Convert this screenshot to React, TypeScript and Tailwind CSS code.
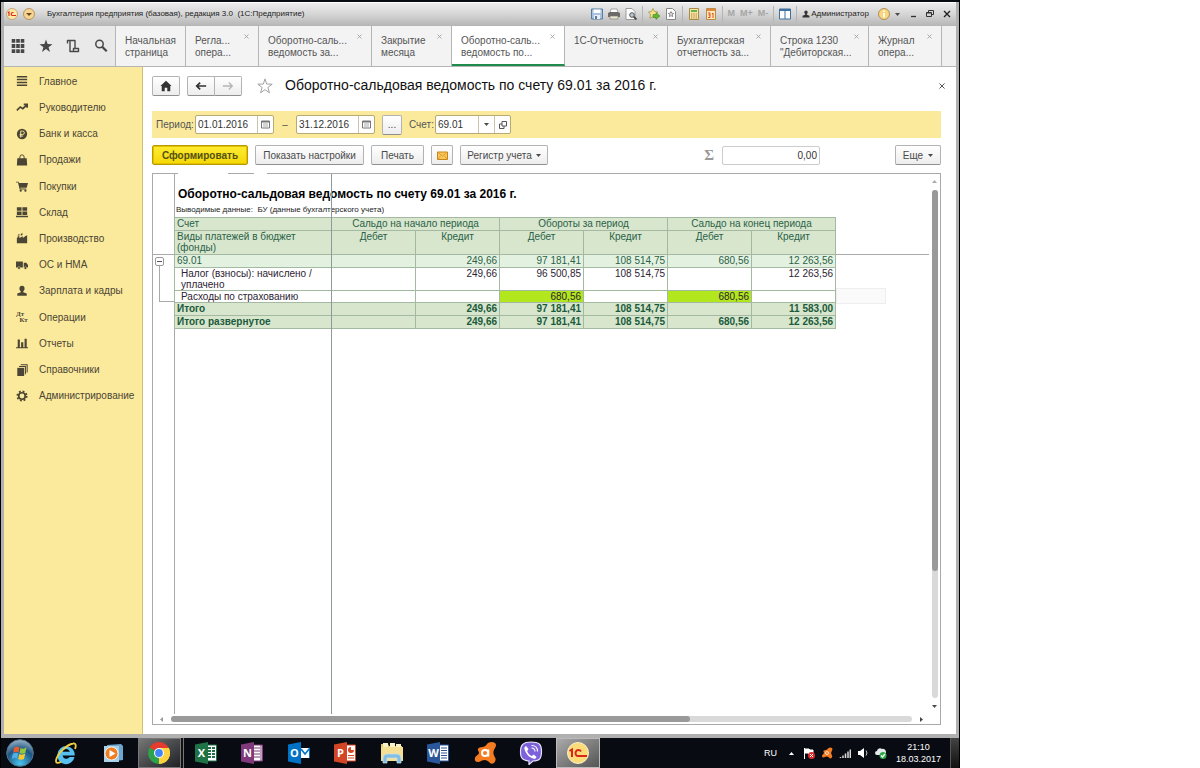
import { ReactNode } from 'react';

const sections = [
    { label: 'Главное', icon: <path d="M1 2h12M1 5.3h12M1 8.7h12M1 12h12" stroke="currentColor" strokeWidth="1.6" /> },
    {
        label: 'Руководителю',
        icon: <path d="M1 11l4-4 3 2 4-4M9 4h4v4" fill="none" stroke="currentColor" strokeWidth="2" />,
    },
    {
        label: 'Банк и касса',
        icon: (
            <>
                <circle cx="7" cy="7" r="6" fill="currentColor" />
                <path d="M5.5 11V3.6h2.3a1.9 1.9 0 010 3.9H4.3M4.3 9.3h4" fill="none" stroke="#fcea9c" strokeWidth="1.1" />
            </>
        ),
    },
    {
        label: 'Продажи',
        icon: (
            <>
                <path d="M1.500 5h11l.5 8.500H1z" fill="currentColor" />
                <path d="M4.5 7V3.5a2.5 2.5 0 015 0V7" fill="none" stroke="currentColor" strokeWidth="1.1" />
            </>
        ),
    },
    {
        label: 'Покупки',
        icon: (
            <>
                <path d="M0 2h3l.5 1.5H14L12.5 9H5l.3 1H12v1H4.3L2.3 3H0z" fill="currentColor" />
                <circle cx="5.5" cy="12.5" r="1.3" fill="currentColor" />
                <circle cx="11" cy="12.5" r="1.3" fill="currentColor" />
            </>
        ),
    },
    {
        label: 'Склад',
        icon: <path d="M1 1.5h5.5v4H1zM7.5 1.5H13v4H7.5zM1 6.5h5.5v4H1zM7.5 6.5H13v4H7.5zM0 11.3h14V13H0z" fill="currentColor" />,
    },
    {
        label: 'Производство',
        icon: <path d="M1 13V7l1-1V5h2v2l4-2v2l4-3 1 0v9zM2 3.5L4 2v2H2zM5.5 2.5l2-1.5v2.5l-2 1z" fill="currentColor" />,
    },
    {
        label: 'ОС и НМА',
        icon: (
            <>
                <path d="M0 3h8v7H0zM9 4.5h3L14 7v3H9z" fill="currentColor" />
                <circle cx="3.5" cy="10.5" r="1.6" fill="currentColor" stroke="#fcea9c" strokeWidth=".5" />
                <circle cx="11" cy="10.5" r="1.6" fill="currentColor" stroke="#fcea9c" strokeWidth=".5" />
            </>
        ),
    },
    {
        label: 'Зарплата и кадры',
        icon: <path d="M7 1a3 3 0 013 3c0 1.5-.7 2.6-1.5 3.2V8.500L12.500 10v2.500h-11V10l4-1.500V7.200C4.700 6.600 4 5.500 4 4a3 3 0 013-3z" fill="currentColor" />,
    },
    {
        label: 'Операции',
        icon: (
            <g fill="currentColor" fontFamily="Liberation Serif, serif" fontWeight="700" fontSize="8">
                <text x="0" y="6">Дт</text>
                <text x="4" y="13">Кт</text>
            </g>
        ),
    },
    { label: 'Отчеты', icon: <path d="M2 3h2.500v9H2zM6 6h2.500v6H6zM10 2h2.500v10H10zM0 12h14v1H0z" fill="currentColor" /> },
    {
        label: 'Справочники',
        icon: (
            <>
                <path d="M1.500 4.500h8V14h-8z" fill="currentColor" />
                <path d="M3.500 3h7.500v9M5.500 1h7.500V10" fill="none" stroke="currentColor" strokeWidth="1.200" />
            </>
        ),
    },
    {
        label: 'Администрирование',
        icon: (
            <>
                <circle cx="7" cy="7" r="3.800" fill="none" stroke="currentColor" strokeWidth="2" />
                <circle cx="7" cy="7" r="5.500" fill="none" stroke="currentColor" strokeWidth="2" strokeDasharray="2.160 2.160" />
            </>
        ),
    },
];

const tabs = [
    { lines: ['Начальная', 'страница'], width: 'w-[70px]', pinned: true },
    { lines: ['Регла...', 'опера...'], width: 'w-[73px]' },
    { lines: ['Оборотно-саль...', 'ведомость за...'], width: 'w-[113px]' },
    { lines: ['Закрытие', 'месяца'], width: 'w-[80px]' },
    { lines: ['Оборотно-саль...', 'ведомость по...'], width: 'w-[113px]', active: true },
    { lines: ['1С-Отчетность'], width: 'w-[103px]' },
    { lines: ['Бухгалтерская', 'отчетность за...'], width: 'w-[103px]' },
    { lines: ['Строка 1230', '"Дебиторская...'], width: 'w-[98px]' },
    { lines: ['Журнал', 'опера...'], width: 'w-[73px]' },
];

const rows = [
    { name: '69.01', kind: 'account', height: 'h-[13px]', values: ['', '249,66', '97 181,41', '108 514,75', '680,56', '12 263,56'] },
    { name: 'Налог (взносы): начислено / уплачено', kind: 'detail', height: 'h-[23px]', values: ['', '249,66', '96 500,85', '108 514,75', '', '12 263,56'] },
    { name: 'Расходы по страхованию', kind: 'detail', height: 'h-[12px]', values: ['', '', '680,56', '', '680,56', ''], marked: true },
    { name: 'Итого', kind: 'total', height: 'h-[13px]', values: ['', '249,66', '97 181,41', '108 514,75', '', '11 583,00'] },
    { name: 'Итого развернутое', kind: 'total', height: 'h-[13px]', values: ['', '249,66', '97 181,41', '108 514,75', '680,56', '12 263,56'] },
];

const rowStyles: Record<string, string> = {
    account: 'bg-[#e3f2e0] text-[#2b6148]',
    detail: 'bg-white text-[#2c2433]',
    total: 'bg-[#d7e6cd] font-bold text-[#1b5a3c]',
};

const button =
    'flex h-5 items-center justify-center rounded-[2px] border border-[#b3b3b3] border-b-[#8f8f8f] bg-gradient-to-b from-white to-[#ededed] text-[10px] text-[#4a4a4a]';

function Svg({ size = 'size-[14px]', box = 14, children }: { size?: string; box?: number; children: ReactNode }) {
    return (
        <svg viewBox={`0 0 ${box} ${box}`} className={`${size} shrink-0`} aria-hidden="true">
            {children}
        </svg>
    );
}

function Caret() {
    return (
        <svg viewBox="0 0 5 3" className="h-[3px] w-[5px]" aria-hidden="true">
            <path d="M0 0h5L2.500 3z" fill="#4a4a4a" />
        </svg>
    );
}

function Separator() {
    return <span className="h-4 w-px bg-[#b4b4b4]" />;
}

function TitleBar() {
    return (
        <header className="flex h-6 items-center bg-gradient-to-b from-[#eeeeee] via-[#d6d6d6] to-[#b5b5b5] pr-px pl-[2px] text-[9px] text-[#222] shadow-[inset_0_1px_0_#fff]">
            <button aria-label="Меню 1С" className="mr-[5px]">
                <Svg size="size-3" box={12}>
                    <circle cx="6" cy="6" r="5.500" fill="#fde9a6" stroke="#b98d62" strokeWidth=".7" />
                    <path d="M2 5l1-1v4M7.500 4.800a1.500 1.500 0 10-.5 2.700H10" fill="none" stroke="#d8291c" strokeWidth="1.100" />
                </Svg>
            </button>
            <button aria-label="Главное меню">
                <Svg size="size-3" box={12}>
                    <circle cx="6" cy="6" r="5.500" fill="#f8d491" stroke="#a48455" strokeWidth=".8" />
                    <path d="M3 5h6L6 8z" fill="#6b4b23" />
                </Svg>
            </button>
            <span className="ml-1"><Separator /></span>
            <h1 className="ml-2 text-[8px] whitespace-pre">Бухгалтерия предприятия (базовая), редакция 3.0  (1С:Предприятие)</h1>
            <div className="ml-auto flex items-center gap-[5px]">
                <button aria-label="Сохранить">
                    <Svg size="size-3" box={12}>
                        <path d="M.5 1h11v10H.5z" fill="#a8c3df" stroke="#567ca4" />
                        <path d="M2.500 1.500h7V5h-7z" fill="#fff" />
                        <path d="M3 7h6v4H3z" fill="#e9eff5" />
                        <path d="M4 8h2v3H4z" fill="#567ca4" />
                    </Svg>
                </button>
                <button aria-label="Печать документа">
                    <Svg size="size-3" box={12}>
                        <path d="M3 1h6l1 4H2z" fill="#fff" stroke="#888" strokeWidth=".7" />
                        <path d="M0 5l2-1h8l2 1v4H0z" fill="#6d6a67" />
                        <path d="M2 8h8v3H2z" fill="#ece5cc" stroke="#777" strokeWidth=".6" />
                    </Svg>
                </button>
                <button aria-label="Просмотр">
                    <Svg size="size-3" box={12}>
                        <path d="M1 .5h6l3 3v8H1z" fill="#fff" stroke="#9a9a9a" />
                        <circle cx="7" cy="7" r="2.300" fill="#b9cbd8" stroke="#555" />
                        <path d="M8.700 8.700L11.500 11.500" stroke="#444" strokeWidth="1.800" />
                    </Svg>
                </button>
                <Separator />
                <button aria-label="В избранное">
                    <Svg size="size-3" box={12}>
                        <path d="M5 .5l1.500 3 3.500.5-2.500 2.500.5 4-3-2-3 2 .5-4L.5 4l3-.5z" fill="#f6e28a" stroke="#a18f38" strokeWidth=".7" />
                        <path d="M5 6.500h3V4.500L12 8l-4 3.500v-2H5z" fill="#64b82c" stroke="#3d7a1a" strokeWidth=".5" />
                    </Svg>
                </button>
                <button aria-label="Избранное окна">
                    <Svg size="size-3" box={12}>
                        <path d="M1.500.5h6l3 3v8h-9z" fill="#fff" stroke="#888" />
                        <path d="M6 3.500l.8 1.700 1.900.2-1.400 1.300.4 1.900L6 7.700l-1.700.9.4-1.900-1.400-1.300 1.900-.2z" fill="#ddd" stroke="#555" strokeWidth=".6" />
                    </Svg>
                </button>
                <Separator />
                <button aria-label="Калькулятор">
                    <Svg size="size-3" box={12}>
                        <path d="M1.500.5h9v11h-9z" fill="#f4e5a8" stroke="#a98b42" />
                        <path d="M3 2h6v2H3z" fill="#6bb04a" />
                        <path d="M3 6h6M3 8h6M3 10h6" stroke="#b8792f" strokeDasharray="1.300 1" />
                    </Svg>
                </button>
                <button aria-label="Календарь">
                    <Svg size="size-3" box={12}>
                        <path d="M1.500.5h9v11h-9z" fill="#fbe9b8" stroke="#bd8a4a" />
                        <path d="M2 1h8v2H2z" fill="#e3873d" />
                        <path d="M3 5h2v4.500H3M3.500 7H5M7 6l1-1v5" fill="none" stroke="#e04a1d" />
                    </Svg>
                </button>
                <Separator />
                <button className="font-bold text-[#a5a5a5]">M</button>
                <button className="font-bold text-[#a5a5a5]">M+</button>
                <button className="font-bold text-[#a5a5a5]">M-</button>
                <Separator />
                <button aria-label="Панели окна">
                    <Svg size="size-3" box={12}>
                        <path d="M.5 1h11v10H.5z" fill="#fff" stroke="#40709e" />
                        <path d="M0 1h12v2H0zM5.500 2h1v9h-1z" fill="#40709e" />
                    </Svg>
                </button>
                <Separator />
                <button className="flex items-center gap-px text-[8px]">
                    <Svg size="size-2">
                        <path d="M7 1a3 3 0 013 3c0 1.500-.7 2.600-1.500 3.200V8.500L13 10v3H1v-3l4.500-1.500V7.200C4.700 6.600 4 5.500 4 4a3 3 0 013-3z" fill="#333" />
                    </Svg>
                    Администратор
                </button>
                <button aria-label="Справка" className="ml-1">
                    <Svg size="size-3" box={12}>
                        <circle cx="6" cy="6" r="5.500" fill="#f9d77f" stroke="#a17c3c" strokeWidth=".8" />
                        <path d="M6 2.500v1.500M6 5v4.500" stroke="#fff" strokeWidth="1.800" />
                    </Svg>
                </button>
                <Caret />
                <button aria-label="Свернуть" className="ml-1">
                    <Svg size="size-2" box={8}><path d="M2 6.500h5" stroke="#333" strokeWidth="1.300" /></Svg>
                </button>
                <button aria-label="Восстановить" className="ml-1">
                    <Svg size="size-2" box={8}><path d="M2.500 2.500v-2h5v4h-2M.5 2.500h5v4h-5zM.5 3h5" fill="none" stroke="#333" /></Svg>
                </button>
                <button aria-label="Закрыть программу" className="mx-1">
                    <Svg size="size-2" box={8}><path d="M1 1l6 6M7 1L1 7" stroke="#222" strokeWidth="1.400" /></Svg>
                </button>
            </div>
        </header>
    );
}

function TabStrip() {
    return (
        <nav className="flex h-[41px] border-b border-[#b5b5b5] bg-[#f0f0f0] text-[10px] leading-3 text-[#555]">
            <div className="flex w-28 shrink-0 items-center border-r border-[#b5b5b5] bg-[#e9e9e9] text-[#484848]">
                <button aria-label="Все разделы" className="flex w-7 justify-center">
                    <Svg>
                        <path d="M2.500 0v14M7 0v14M11.500 0v14" stroke="currentColor" strokeWidth="3.600" strokeDasharray="3.800 1.300" />
                    </Svg>
                </button>
                <button aria-label="Избранное" className="flex w-7 justify-center">
                    <Svg><path d="M7 .5l1.600 4.600 4.900.1-3.900 3 1.400 4.700L7 10.100l-4 2.800 1.400-4.700-3.900-3 4.900-.1z" fill="currentColor" /></Svg>
                </button>
                <button aria-label="История" className="flex w-7 justify-center">
                    <Svg><path d="M1.500 4.500V1.500H9v8M4 1.500v11h8.500V9.500H7.500v3" fill="none" stroke="currentColor" strokeWidth="1.400" strokeLinejoin="round" /></Svg>
                </button>
                <button aria-label="Поиск" className="flex w-7 justify-center">
                    <Svg>
                        <circle cx="5.500" cy="5" r="3.700" fill="none" stroke="currentColor" strokeWidth="1.500" />
                        <path d="M8.200 7.800l4.500 4.500" stroke="currentColor" strokeWidth="2.300" />
                    </Svg>
                </button>
            </div>
            {tabs.map((tab, index) => (
                <div
                    key={index}
                    className={`relative shrink-0 border-r border-[#b5b5b5] ${tab.width} ${tab.active ? 'border-b-2 border-b-[#1f8b4c] bg-white' : 'bg-[#f3f3f3]'}`}
                >
                    <button className="flex h-full w-full flex-col items-start pt-[9px] pl-[9px] text-left whitespace-nowrap">
                        {tab.lines.map((line) => (
                            <span key={line}>{line}</span>
                        ))}
                    </button>
                    {!tab.pinned && (
                        <button aria-label="Закрыть вкладку" className="absolute top-2 right-[9px]">
                            <Svg size="size-[5px]" box={5}><path d="M.5.5l4 4M4.500.5l-4 4" stroke="#999" strokeWidth=".8" /></Svg>
                        </button>
                    )}
                </div>
            ))}
        </nav>
    );
}

function Sidebar() {
    return (
        <aside className="w-[139px] shrink-0 border-r border-[#d0bf78] bg-[#fcea9c] pt-px">
            <ul className="grid h-[341px] auto-rows-fr text-[10px] text-[#4a4535]">
                {sections.map((section) => (
                    <li key={section.label} className="flex">
                        <a href="#" className="flex w-full items-center gap-[11px] pl-3">
                            <Svg size="size-3">{section.icon}</Svg>
                            {section.label}
                        </a>
                    </li>
                ))}
            </ul>
        </aside>
    );
}

function DateField({ label, value }: { label: string; value: string }) {
    return (
        <div className="flex h-[19px] w-[79px] rounded-[2px] border border-[#b8aa75] bg-white">
            <input aria-label={label} defaultValue={value} className="min-w-0 flex-1 pl-[2px] text-[10px] text-[#333] outline-none" />
            <button aria-label="Выбрать дату" className="flex w-4 items-center justify-center border-l border-[#c9c3ae]">
                <Svg size="size-[9px]" box={9}>
                    <path d="M.5 1h8v7h-8z" fill="#fff" stroke="#777" />
                    <path d="M0 1h9v1.500H0z" fill="#777" />
                    <path d="M2 4h5M2 6h5" stroke="#aaa" />
                </Svg>
            </button>
        </div>
    );
}

function FormHeader() {
    return (
        <div className="flex h-[37px] items-center">
            <button aria-label="Начальная страница" className={`${button} w-7`}>
                <Svg size="size-3"><path d="M7 1l6.500 6H12v6H8.500V9h-3v4H2V7H.5z" fill="#333" /></Svg>
            </button>
            <div className="ml-[7px] flex">
                <button aria-label="Назад" className={`${button} w-7 rounded-r-none border-r-[#ccc]`}>
                    <Svg size="size-3"><path d="M13 7H2M6 3L2 7l4 4" fill="none" stroke="#333" strokeWidth="2" /></Svg>
                </button>
                <button aria-label="Вперед" className={`${button} -ml-px w-7 rounded-l-none`}>
                    <Svg size="size-3"><path d="M1 7h11M8 3l4 4-4 4" fill="none" stroke="#b5b5b5" strokeWidth="1.500" /></Svg>
                </button>
            </div>
            <button aria-label="Добавить в избранное" className="ml-[15px]">
                <Svg size="size-4"><path d="M7 .8l1.500 4.500 4.800.1-3.800 2.900 1.400 4.600L7 10.200l-3.900 2.700 1.400-4.600L.7 5.400l4.800-.1z" fill="#fff" stroke="#999" strokeWidth=".8" /></Svg>
            </button>
            <h2 className="ml-3 text-[14px] text-[#111]">Оборотно-сальдовая ведомость по счету 69.01 за 2016 г.</h2>
            <button aria-label="Закрыть форму" className="-mr-1 ml-auto">
                <Svg size="size-[6px]" box={6}><path d="M.5.5l5 5M5.500.5l-5 5" stroke="#555" /></Svg>
            </button>
        </div>
    );
}

function FilterBar() {
    return (
        <div className="mt-[7px] flex h-[27px] items-center bg-[#fcea9c] pl-1 text-[10px] text-[#555]">
            <span className="w-[39px]">Период:</span>
            <DateField label="Начало периода" value="01.01.2016" />
            <span className="w-[22px] text-center">–</span>
            <DateField label="Конец периода" value="31.12.2016" />
            <button className={`${button} ml-[7px] w-5`}>...</button>
            <label htmlFor="account" className="ml-[7px] w-[26px]">Счет:</label>
            <div className="flex h-[19px] w-[76px] rounded-[2px] border border-[#b8aa75] bg-white">
                <input id="account" defaultValue="69.01" className="min-w-0 flex-1 pl-[2px] text-[10px] text-[#333] outline-none" />
                <button aria-label="Выбрать счет" className="flex w-4 items-center justify-center border-l border-[#c9c3ae]">
                    <Caret />
                </button>
                <button aria-label="Открыть счет" className="flex w-4 items-center justify-center border-l border-[#c9c3ae]">
                    <Svg size="size-2" box={8}><path d="M3 .5h4.500V5H3zM3 3H.5v4.500H5V5" fill="none" stroke="#555" /></Svg>
                </button>
            </div>
        </div>
    );
}

function Commands() {
    return (
        <div className="mt-[7px] flex items-center gap-[7px]">
            <button className="flex h-5 w-24 items-center justify-center rounded-[2px] border border-[#b99b00] bg-gradient-to-b from-[#ffec2e] to-[#f4d800] text-[10px] font-bold text-[#54500f] shadow-[inset_0_0_0_1px_#e3c000]">
                Сформировать
            </button>
            <button className={`${button} w-[109px]`}>Показать настройки</button>
            <button className={`${button} w-[53px]`}>Печать</button>
            <button aria-label="Отправить по почте" className={`${button} w-[22px]`}>
                <Svg size="size-[11px]" box={11}>
                    <path d="M.5 2h10v7.500H.5z" fill="#f9c65a" stroke="#c98618" />
                    <path d="M1 2.500L5.500 6 10 2.500M1 9l3-3.500M10 9L7 5.500" fill="none" stroke="#d9932a" strokeWidth=".8" />
                </Svg>
            </button>
            <button className={`${button} w-[88px] gap-1`}>Регистр учета <Caret /></button>
            <div className="ml-auto flex items-center gap-2">
                <label htmlFor="sum" className="font-['Liberation_Serif',serif] text-[15px] leading-4 font-bold text-[#999]">Σ</label>
                <input id="sum" defaultValue="0,00" className="h-[19px] w-[98px] rounded-[2px] border border-[#ccc] px-[2px] text-right text-[10px] text-[#333]" />
            </div>
            <button className={`${button} ml-[68px] w-[46px] gap-[5px]`}>Еще <Caret /></button>
        </div>
    );
}

function BalanceTable() {
    const cell = 'border border-[#a3b9a2] p-0 align-top';
    return (
        <table className="w-[661px] shrink-0 table-fixed border-collapse text-[10px] leading-[11px]">
            <colgroup>
                <col className="w-[157px]" />
                <col span={6} className="w-[84px]" />
            </colgroup>
            <thead className="bg-[#d7e6cd] text-[#2b6148]">
                <tr className="h-[13px]">
                    <th className={`${cell} pl-[2px] text-left font-normal`}>Счет</th>
                    <th colSpan={2} className={`${cell} font-normal`}>Сальдо на начало периода</th>
                    <th colSpan={2} className={`${cell} font-normal`}>Обороты за период</th>
                    <th colSpan={2} className={`${cell} font-normal`}>Сальдо на конец периода</th>
                </tr>
                <tr className="h-6">
                    <th className={`${cell} pl-[2px] text-left font-normal`}>Виды платежей в бюджет (фонды)</th>
                    {[0, 1, 2].flatMap((group) => [
                        <th key={`d${group}`} className={`${cell} font-normal`}>Дебет</th>,
                        <th key={`k${group}`} className={`${cell} font-normal`}>Кредит</th>,
                    ])}
                </tr>
            </thead>
            <tbody>
                {rows.map((row) => (
                    <tr key={row.name} className={`${row.height} ${rowStyles[row.kind]}`}>
                        <td className={`${cell} ${row.kind === 'detail' ? 'pr-2 pl-[6px]' : 'pl-[2px]'}`}>{row.name}</td>
                        {row.values.map((value, index) => (
                            <td key={index} className={`${cell} pr-[2px] text-right ${row.marked && value ? 'bg-[#b2e61d]' : ''}`}>
                                {value}
                            </td>
                        ))}
                    </tr>
                ))}
            </tbody>
        </table>
    );
}

function Sheet() {
    return (
        <div className="relative mt-2 flex flex-1 flex-col border border-[#a9a9a9] bg-white">
            <span className="absolute -top-px left-[25px] h-px w-[50px] bg-white" />
            <span className="absolute -top-px left-[101px] h-px w-[13px] bg-white" />
            <div className="flex flex-1">
                <div className="flex w-[22px] shrink-0 flex-col border-r border-[#a9a9a9]">
                    <div className="h-[81px] border-b border-[#a9a9a9]" />
                    <button aria-label="Свернуть группу" className="mt-[2px] ml-[2px] flex size-[9px] items-center justify-center rounded-[2px] border border-[#999]">
                        <span className="h-px w-[5px] bg-[#555]" />
                    </button>
                    <div className="ml-[6px] h-9 border-b border-l border-[#a9a9a9]" />
                </div>
                <div className="relative min-w-0 flex-1">
                    <h3 className="pt-[12px] pl-[3px] text-[12px] leading-4 font-bold text-black">
                        Оборотно-сальдовая ведомость по счету 69.01 за 2016 г.
                    </h3>
                    <p className="pl-px text-[8px] leading-[15px] whitespace-pre text-[#222]">
                        Выводимые данные:  БУ (данные бухгалтерского учета)
                    </p>
                    <div className="-ml-px flex">
                        <BalanceTable />
                        <div className="flex-1">
                            <div className="h-[38px] border-b border-[#a9a9a9]" />
                            <div className="mt-[33px] h-4 w-[50px] border border-[#eee] bg-[#fafafa]" />
                        </div>
                    </div>
                    <span className="absolute inset-y-0 left-[156px] w-px bg-[#8d9a9a]" />
                </div>
                <div className="flex w-[11px] flex-col items-center gap-[7px] pt-[6px] pb-[6px]">
                    <svg viewBox="0 0 5 3" className="h-[3px] w-[5px]"><path d="M0 3h5L2.500 0z" fill="#aaa" /></svg>
                    <div className="flex w-[6px] flex-1 flex-col rounded-full bg-[#d9d9d9]">
                        <div className="h-3/4 rounded-full bg-[#999]" />
                    </div>
                    <Caret />
                </div>
            </div>
            <div className="flex h-[10px] items-center gap-2 pr-[17px] pl-[7px]">
                <svg viewBox="0 0 3 5" className="h-[5px] w-[3px]"><path d="M3 0v5L0 2.500z" fill="#999" /></svg>
                <div className="flex h-[6px] flex-1 rounded-full bg-[#d9d9d9]">
                    <div className="w-7/10 rounded-full bg-[#999]" />
                </div>
                <svg viewBox="0 0 3 5" className="h-[5px] w-[3px]"><path d="M0 0v5l3-2.500z" fill="#444" /></svg>
            </div>
        </div>
    );
}

function OfficeIcon({ color, mark, children }: { color: string; mark: string; children: ReactNode }) {
    return (
        <Svg size="size-[22px]" box={22}>
            <path d="M11 3h10.500v16H11z" fill="#fff" stroke={color} />
            {children}
            <path d="M0 2.500L13 0v22L0 19.500z" fill={color} />
            <text x="6.500" y="15" fill="#fff" fontSize="11" fontWeight="700" textAnchor="middle" fontFamily="Open Sans, sans-serif">{mark}</text>
        </Svg>
    );
}

const apps = [
    {
        name: 'Internet Explorer',
        icon: (
            <Svg size="size-6" box={24}>
                <path d="M20.500 16A8.600 8.600 0 113.500 13a8.600 8.600 0 0117.200 1.500H8.500a4 4 0 007.200 1.500zM8.500 10.800h7.200a3.700 3.700 0 00-7.200 0z" fill="#56c1f0" fillRule="evenodd" />
                <path d="M21 8c1.500-4 .6-6-2-5.500C13 3.500 3 13 2 19.500c-.3 3 2.300 3 5 1.200" fill="none" stroke="#f2cf3e" strokeWidth="1.800" />
            </Svg>
        ),
    },
    {
        name: 'Медиаплеер',
        icon: (
            <Svg size="size-5" box={20}>
                <path d="M4 2l14-1 2 2v14l-14 2z" fill="#6da7cf" />
                <path d="M1 3h15v16H1z" fill="#a9d0e9" />
                <circle cx="8.500" cy="10.500" r="6.500" fill="#ef7d22" stroke="#fff" strokeWidth=".8" />
                <path d="M6.500 7v7l6-3.500z" fill="#fff" />
            </Svg>
        ),
    },
    {
        name: 'Chrome',
        running: true,
        icon: (
            <Svg size="size-[22px]" box={22}>
                <path d="M11 11L1.500 5.500A11 11 0 0120.500 5.500z" fill="#e33b2e" />
                <path d="M11 11L20.500 5.500A11 11 0 0111 22z" fill="#fdd23e" />
                <path d="M11 11V22A11 11 0 011.500 5.500z" fill="#2da14c" />
                <path d="M11 6h9.800a11 11 0 01-9.800 16l5-8.500z" fill="#fdd23e" />
                <circle cx="11" cy="11" r="5" fill="#fff" />
                <circle cx="11" cy="11" r="3.900" fill="#4285f4" />
            </Svg>
        ),
    },
    { name: 'Excel', icon: <OfficeIcon color="#1f7245" mark="X"><path d="M13 6h7M13 9h7M13 12h7M13 15h7" stroke="#1f7245" strokeWidth="1.800" strokeDasharray="3 1" /></OfficeIcon> },
    { name: 'OneNote', icon: <OfficeIcon color="#80397b" mark="N"><path d="M13 6h6M13 9h6M13 12h6M13 15h6M20 3v16" stroke="#80397b" /></OfficeIcon> },
    { name: 'Outlook', icon: <OfficeIcon color="#0072c6" mark="O"><path d="M11 2h11v4H11zM11 16h11v4H11z" fill="#080b12" /><path d="M13 7l4 5 5-6" fill="none" stroke="#0072c6" strokeWidth="1.600" /></OfficeIcon> },
    { name: 'PowerPoint', icon: <OfficeIcon color="#d24625" mark="P"><circle cx="17" cy="8" r="3" fill="#d24625" /><path d="M17 8V4.500h3.500V8z" fill="#fff" /><path d="M14 13.500h6M14 16h6" stroke="#d24625" /></OfficeIcon> },
    {
        name: 'Проводник',
        icon: (
            <Svg size="size-6" box={24}>
                <path d="M1 3h7l1 2h13v15H1z" fill="#e6c863" />
                <path d="M3 2h5v4H3zM10 2h5v4h-5zM16 3h5v4h-5z" fill="#f8f0c8" />
                <path d="M1 6h22v14H1z" fill="#f4df94" />
                <path d="M3 22v-5a4 4 0 014-4h10a4 4 0 014 4v5h-4v-5H7v5z" fill="#83bfe3" stroke="#c7e3f3" strokeWidth=".7" />
            </Svg>
        ),
    },
    { name: 'Word', icon: <OfficeIcon color="#2b579a" mark="W"><path d="M14 6h6M14 8.500h6M14 11h6M14 13.500h6M14 16h6" stroke="#2b579a" /></OfficeIcon> },
    {
        name: 'Avast',
        icon: (
            <Svg size="size-6" box={24}>
                <path d="M10 6q3-1 5-4Q19 0 22 2q2 2 0 5-3 4-.5 8.500Q24 19 21 22q-3 2-5-1-3-3-7-1.500-5 3-7 0Q1 16 5 13.500 7 12 5 9.500 4 6 10 6z" fill="#f47b20" />
                <circle cx="12" cy="12" r="3" fill="none" stroke="#fff" strokeWidth="2" />
                <path d="M15.300 8.500v7" stroke="#fff" strokeWidth="2" />
            </Svg>
        ),
    },
    {
        name: 'Viber',
        icon: (
            <Svg size="size-6" box={24}>
                <path d="M12 1c8 0 10.500 2 10.500 9.500S20 20 14 20l-4 3.500V20C3 19 1.500 17 1.500 10.500S4 1 12 1z" fill="#7d62dc" stroke="#e9e4fb" strokeWidth="1.200" />
                <path d="M7 5l2.500 3-1.300 2c.7 2.400 2.200 4 4.600 5l2-1.500 2.700 2.500c-.9 2-2 2-3.500 1.500C9.500 16 6.500 12 5.500 8 5 6.500 6 5.500 7 5z" fill="#fff" />
                <path d="M12.500 4.500c4 0 6 2.500 6 6M12.500 7c2.200 0 3.400 1.400 3.500 3.500" fill="none" stroke="#fff" strokeWidth="1.100" />
            </Svg>
        ),
    },
    {
        name: '1С:Предприятие',
        current: true,
        icon: (
            <Svg size="size-[22px]" box={22}>
                <circle cx="11" cy="11" r="10.500" fill="#fbdc79" stroke="#f7efcf" />
                <path d="M2.500 9L5 7.500V15" fill="none" stroke="#d9261c" strokeWidth="2" />
                <path d="M14 9.500a3 3 0 10-2.500 4.600H20" fill="none" stroke="#d9261c" strokeWidth="2" />
            </Svg>
        ),
    },
];

function Taskbar() {
    return (
        <footer className="flex h-[30px] bg-[#080b12] text-[9px] leading-3 text-white">
            <button aria-label="Пуск" className="flex w-[42px] items-center pl-[5px]">
                <Svg size="size-7" box={28}>
                    <defs>
                        <radialGradient id="orb" cx=".5" cy=".9" r=".9">
                            <stop offset="0" stopColor="#49c5ee" />
                            <stop offset=".6" stopColor="#1d5482" />
                            <stop offset="1" stopColor="#9db6c8" />
                        </radialGradient>
                    </defs>
                    <circle cx="14" cy="14" r="13.300" fill="url(#orb)" stroke="#54738c" />
                    <path d="M8 9q3-2 5.500-.5L12.500 13.500Q10 12 7 14z" fill="#ea5b2b" />
                    <path d="M14.500 9q3 1.500 6-.5L19.300 14q-3 1.500-5.800 0z" fill="#93c83e" />
                    <path d="M6.800 15q3-2 5.500-.5L11 19.500Q9 18 5.700 20z" fill="#4fb0e8" />
                    <path d="M13.300 15q3 1.500 6-.5L18 20q-3 1.500-5.800 0z" fill="#fbc92e" />
                </Svg>
            </button>
            <div className="grid w-[558px] grid-cols-12">
                {apps.map((app) => (
                    <button
                        key={app.name}
                        aria-label={app.name}
                        className={`flex items-center justify-center ${app.running ? 'mr-[2px] ml-[2px] border border-[#777] bg-gradient-to-br from-[#777] to-[#202226] shadow-[2px_0_0_#111,3px_0_0_#777]' : ''} ${app.current ? 'mx-px border border-[#bbb] bg-gradient-to-br from-[#aaa] to-[#555]' : ''}`}
                    >
                        {app.icon}
                    </button>
                ))}
            </div>
            <div className="ml-auto flex items-center">
                <span className="w-[25px]">RU</span>
                <button aria-label="Скрытые значки" className="w-[14px]">
                    <svg viewBox="0 0 5 3" className="h-[3px] w-[5px]"><path d="M0 3h5L2.500 0z" fill="#fff" /></svg>
                </button>
                <div className="flex gap-[6px]">
                    <Svg size="size-3" box={12}>
                        <path d="M1.500 1v11M2 2h4l1 1h3v4H6L5 6H2z" fill="#fff" stroke="#fff" />
                        <circle cx="8.500" cy="8.500" r="3.500" fill="#d92b2b" />
                        <path d="M7 7l3 3M10 7l-3 3" stroke="#fff" />
                    </Svg>
                    <Svg size="size-3" box={24}>
                        <path d="M10 6q3-1 5-4Q19 0 22 2q2 2 0 5-3 4-.5 8.500Q24 19 21 22q-3 2-5-1-3-3-7-1.500-5 3-7 0Q1 16 5 13.500 7 12 5 9.500 4 6 10 6z" fill="#f47b20" />
                        <circle cx="12" cy="12" r="3" fill="none" stroke="#fff" strokeWidth="1.500" />
                    </Svg>
                    <Svg size="size-3" box={12}>
                        <path d="M1.500 10v1M4 8.500V11M6.500 6.500V11M9 4.500V11M11.300 2.500V11" stroke="#ddd" strokeWidth="1.500" />
                    </Svg>
                    <Svg size="size-3" box={12}>
                        <path d="M1 4h2l4-3v10L3 8H1z" fill="#fff" />
                        <path d="M9 3.500q2 2.500 0 5" fill="none" stroke="#ccc" />
                    </Svg>
                    <Svg size="size-3" box={12}>
                        <path d="M2 8a2 2 0 010-4 3 3 0 015-2 3 3 0 014 3v3z" fill="#e5e9ec" />
                        <circle cx="8" cy="8.500" r="3.500" fill="#2fa84c" />
                        <path d="M6 8.500L7.500 10 10 7" fill="none" stroke="#fff" strokeWidth="1.200" />
                    </Svg>
                </div>
                <button className="w-[63px] text-center">
                    21:10
                    <br />
                    18.03.2017
                </button>
                <button aria-label="Показать рабочий стол" className="h-full w-[9px] border-l border-[#555] bg-gradient-to-b from-[#444] to-[#111]" />
            </div>
        </footer>
    );
}

export default function App() {
    return (
        <div className="min-h-screen bg-white">
            <div className="flex min-h-screen w-4/5 min-w-[960px] flex-col border-x border-black bg-[#080b12] font-['Liberation_Sans',Arial,sans-serif]">
                <div className="mt-[2px] flex flex-1 flex-col border-x-[3px] border-b-4 border-[#b0b0b0]">
                    <TitleBar />
                    <TabStrip />
                    <div className="flex flex-1">
                        <Sidebar />
                        <main className="flex min-w-0 flex-1 flex-col bg-white pr-[15px] pb-[9px] pl-[9px]">
                            <FormHeader />
                            <FilterBar />
                            <Commands />
                            <Sheet />
                        </main>
                    </div>
                </div>
                <Taskbar />
            </div>
        </div>
    );
}
